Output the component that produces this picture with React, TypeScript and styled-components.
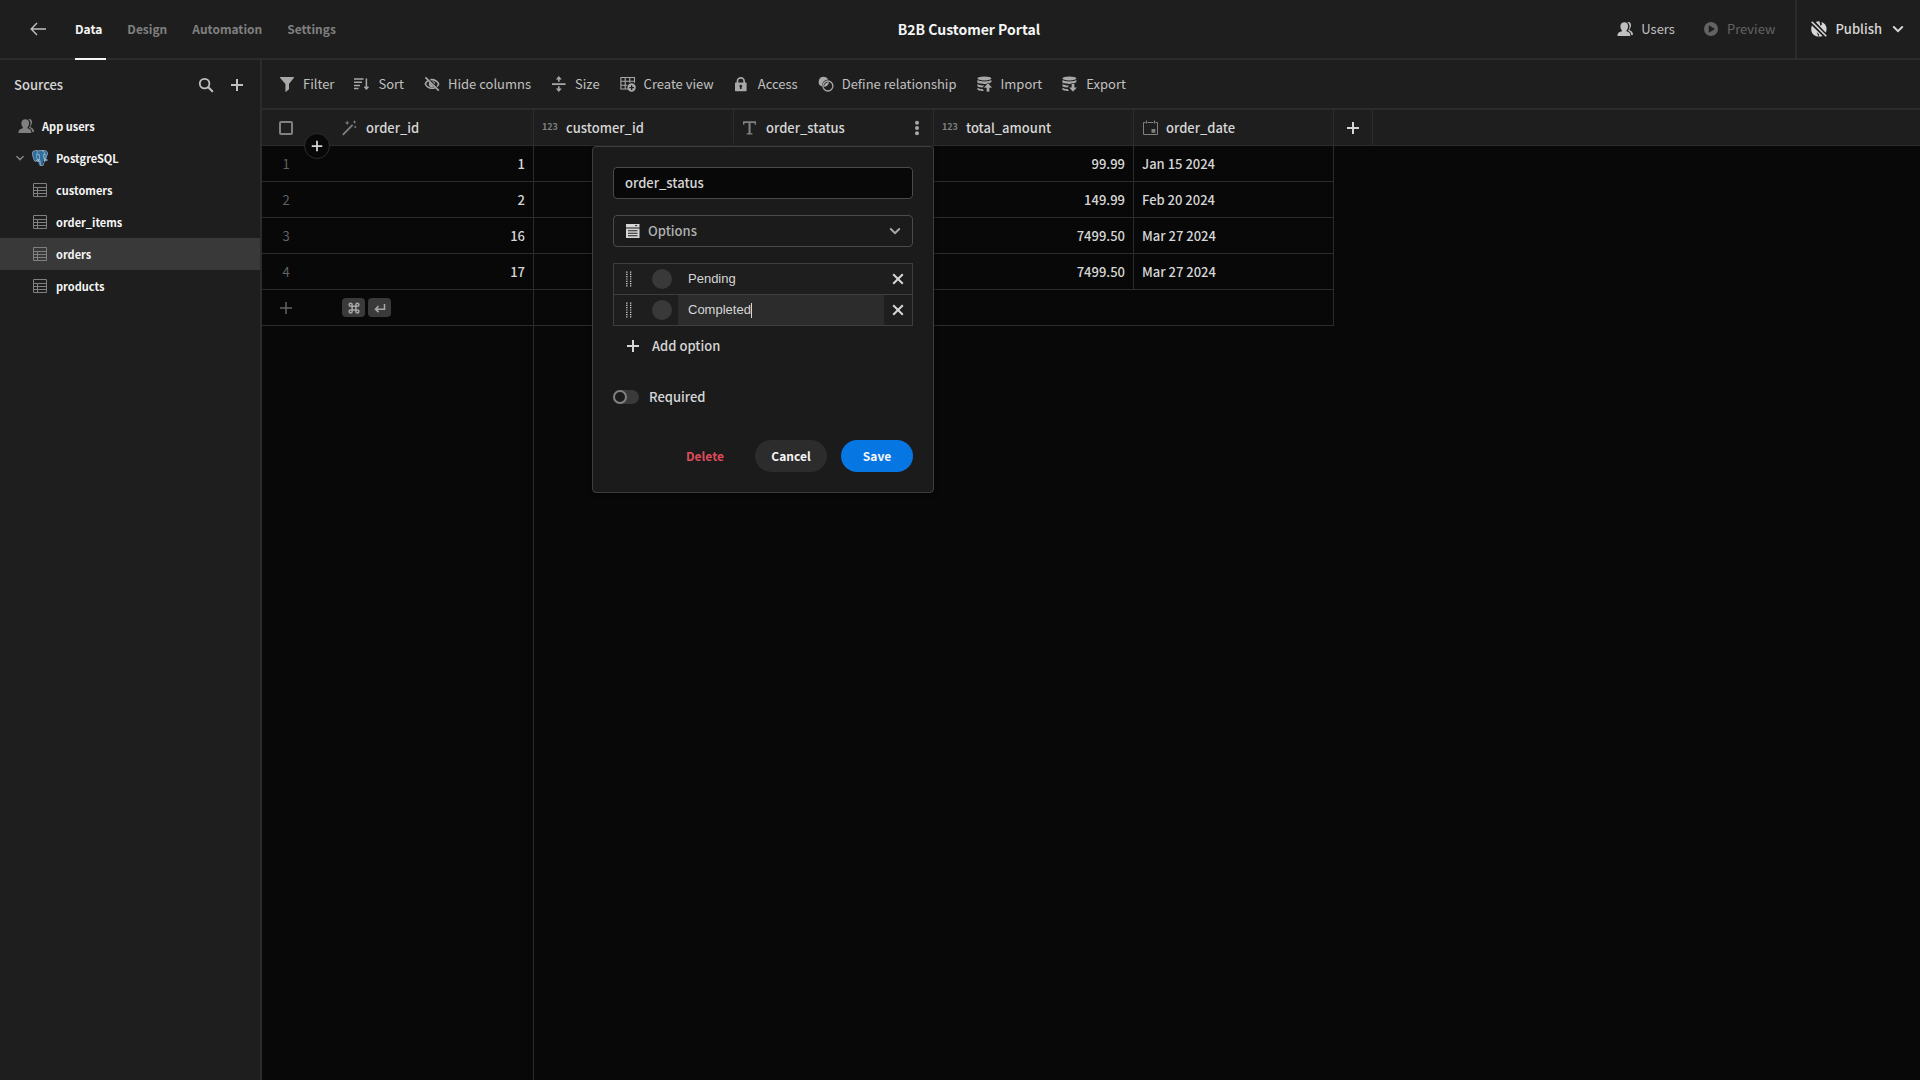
import React from "react";
import styled, { createGlobalStyle } from "styled-components";
import { SiPostgresql } from "react-icons/si";

const c = {
  page: "#080808",
  panel: "#1e1e1e",
  popover: "#1b1b1b",
  line: "#2c2c2c",
  lineStrong: "#3e3e3e",
  field: "#4a4a4a",
  selected: "#393939",
  text: "#d6d6d6",
  soft: "#c0c0c0",
  icon: "#a8a8a8",
  muted: "#808080",
  faint: "#636363",
  white: "#f5f5f5",
  blue: "#0676e3",
  red: "#df4b5a",
};

const GlobalStyle = createGlobalStyle`
  *, *::before, *::after { box-sizing: border-box; }
  body {
    margin: 0;
    background: ${c.page};
    color: ${c.text};
    font-family: "Noto Sans CJK SC", "Source Sans Pro", "Open Sans", sans-serif;
    font-size: 13px;
    line-height: 18px;
  }
  button, input, select { font: inherit; color: inherit; margin: 0; }
  button { background: none; border: 0; padding: 0; cursor: pointer; }
  svg { display: block; flex: none; }
  h1, h2 { margin: 0; font-size: inherit; }
`;

/* ---------- icons ---------- */

const Svg = ({ size = 16, children }: { size?: number; children: React.ReactNode }) => (
  <svg width={size} height={size} viewBox="0 0 16 16" fill="currentColor" aria-hidden="true">
    {children}
  </svg>
);

const stroke = { fill: "none", stroke: "currentColor" } as const;

const BackIcon = () => (
  <Svg><path {...stroke} strokeWidth="1.4" d="M16 8H1.2M7 2 1.2 8 7 14" /></Svg>
);
const PlusIcon = ({ weight = 2 }: { weight?: number }) => (
  <Svg><path {...stroke} strokeWidth={weight} d="M8 2v12M2 8h12" /></Svg>
);
const SearchIcon = () => (
  <Svg>
    <circle {...stroke} strokeWidth="1.8" cx="6.6" cy="6.6" r="4.8" />
    <path {...stroke} strokeWidth="2" strokeLinecap="round" d="m10.3 10.3 4 4" />
  </Svg>
);
const UsersIcon = () => (
  <Svg>
    <path d="M10.3 1.3C12.2.5 14 1.7 14 4.3c0 1.6-.6 2.8-1.3 3.600-.3.400-.2 1.400.2 1.600 1.700.6 3 1.500 3.100 4.500h-1.700c-.2-2.300-1.500-3.600-3.300-4.300.9-1.300 1.500-2.800 1.500-4.500 0-1.600-.8-3.100-2.200-3.900z" />
    <path d="M7.400 1.300c2.300 0 3.700 1.500 3.700 3.900 0 1.700-.7 3-1.400 3.900-.4.500-.3 1.300.3 1.500 2 .6 3.300 1.500 3.400 4.400H.4c.1-2.900 1.500-3.800 3.900-4.400.7-.2.800-1 .400-1.500-.7-.9-1.300-2.200-1.300-3.900 0-2.400 1.700-3.900 4-3.900z" />
  </Svg>
);
const PlayIcon = () => (
  <Svg><path fillRule="evenodd" d="M8 1a7 7 0 1 1 0 14A7 7 0 0 1 8 1zM5.800 4.200v7.600L12 8z" /></Svg>
);
const GlobeStrikeIcon = () => (
  <Svg>
    <path d="M4.800.9 14.600 11.800c.6-1.100 1-2.400 1-3.800 0-3.300-2.200-6-5.200-6.900l.6 2.400-1.700 1.200L8.500.4C7.200.3 6 .5 4.800.9z" />
    <path d="M.9 4.400 11.600 15c-3.400 1.400-7.900.3-9.900-2.300C0 10.400-.2 7.200.9 4.400z" />
    <path fill="none" stroke={c.panel} strokeWidth="4" d="m.7.7 14.600 14.600" />
    <path {...stroke} strokeWidth="1.600" d="m.7.7 14.600 14.600" />
    <path d="M5.600 11 7.600 15.800l.6-2.400z" fill={c.panel} />
  </Svg>
);
const ChevronIcon = ({ size = 16, weight = 2 }: { size?: number; weight?: number }) => (
  <Svg size={size}><path {...stroke} strokeWidth={weight} strokeLinecap="round" d="M3.800 6 8 10.200 12.200 6" /></Svg>
);
const FilterIcon = () => (
  <Svg><path d="M1.400.9h13.100c.5 0 .7.500.4.900L10 8v5.300l-3 2.500c-.3.200-.6 0-.6-.3V8L1 1.800c-.3-.4-.1-.9.400-.9z" /></Svg>
);
const SortIcon = () => (
  <Svg><path {...stroke} strokeWidth="1.500" d="M0 3h9.500M0 6.200h8M0 9.400h6M0 12.600h4.500M12.400 2.500v10.500M10.400 10.800l2 2.200 2-2.200" /></Svg>
);
const HideIcon = () => (
  <Svg>
    <path {...stroke} strokeWidth="1.600" d="M4 4.600C2.600 5.600 1.600 7 1.300 8c.9 2 3.500 4.300 6.700 4.300 1 0 2-.2 2.800-.6M6.300 3.800C10.500 3 13.800 5.600 14.700 8c-.3.800-.9 1.700-1.800 2.500" />
    <path d="M5.200 6.200 9.600 10.700A3.200 3.200 0 0 1 5.200 6.200zM8 4.900a3.200 3.200 0 0 1 3.100 3.700z" />
    <path {...stroke} strokeWidth="1.600" d="m1.400 1.400 13.400 13.200" />
  </Svg>
);
const SizeIcon = () => (
  <Svg><path d="M1 7.200h13.500v1.700H1zM7 5.800V3.500H4.800L7.800 0l3 3.500H8.600v2.300zM7 10.200v2.300H4.800l3 3.500 3-3.500H8.600v-2.300z" /></Svg>
);
const CreateViewIcon = () => (
  <Svg>
    <path {...stroke} strokeWidth="1.100" d="M8 13H.9V1.500h13.600v5.200M.9 5.200h13.600M.9 9.200h6.300M5.200 1.500V13M9.800 1.500v5.200" />
    <path fillRule="evenodd" d="M11.600 7.300a4.200 4.200 0 1 1 0 8.400 4.200 4.200 0 0 1 0-8.400zM11 9.200v1.700H9.300v1.300H11v1.700h1.300v-1.700H14v-1.300h-1.700V9.200z" />
  </Svg>
);
const LockIcon = () => (
  <Svg><path fillRule="evenodd" d="M2.600 6.500V5.300a4.200 4.200 0 0 1 8.400 0v1.200h1.100c.3 0 .5.200.5.500v7.800c0 .3-.2.500-.5.500H1.500c-.3 0-.5-.2-.5-.5V7c0-.3.200-.5.500-.5zM4.300 6.500h5V5.300a2.500 2.500 0 0 0-5 0zM6.800 8.800A1.400 1.400 0 0 0 6 11.300v1.800h1.600v-1.800a1.400 1.400 0 0 0-.8-2.500z" /></Svg>
);
const RelationIcon = () => (
  <Svg>
    <path d="M5.900.8A5 5 0 0 1 10.300 3.500 6.300 6.300 0 0 0 4 10.500 5 5 0 0 1 5.900.8z" />
    <path d="M11 6.200A5 5 0 0 1 5.800 10.800 5 5 0 0 1 11 6.200z" />
    <circle {...stroke} strokeWidth="1.300" cx="9.900" cy="10" r="5" />
  </Svg>
);
const DataIcon = ({ down }: { down?: boolean }) => (
  <Svg>
    <ellipse cx="7.400" cy="2.400" rx="7" ry="2" />
    <path d="M.4 4.100c2 1.700 12 1.700 14 0v1.800c-.2.500-3.200 2-7 2S.400 7 .400 6.500z" />
    <path d="M.4 8c1.500 1 4 1.600 6.800 1.500l-1.700 2C3 11.400.400 10.700.400 10z M.4 11.800c1.200.8 3 1.200 5.200 1.300L6.900 15C3 15 .400 14.200.400 13.300z" />
    {down ? (
      <path d="M9.300 7.500h3.400v3.700h2.800L11 16l-4.500-4.800h2.800z" stroke={c.panel} strokeWidth=".600" />
    ) : (
      <path d="M9.300 15.900h3.400v-4h2.900L11 6.700l-4.600 5.200h2.900z" stroke={c.panel} strokeWidth=".600" />
    )}
  </Svg>
);
const WandIcon = () => (
  <Svg>
    <path {...stroke} strokeWidth="1.800" d="M.8 14.900 10.600 4.900" />
    <path d="m5.200.5.700 1.700 1.700.7-1.700.7-.7 1.700-.7-1.700-1.700-.7 1.700-.7zM12.600 0l.5 1.400 1.500.5-1.500.6-.5 1.400-.6-1.400-1.400-.6 1.400-.5zM13.200 5.600l.5 1 1 .5-1 .5-.5 1-.5-1-1-.5 1-.5z" />
  </Svg>
);
const TextIcon = () => (
  <Svg><path d="M1 1.300h13v3.500h-1.200l-.5-1.700H8.600v9.800l1.900.6v1H4.600v-1l1.900-.6V3.100H2.700l-.5 1.700H1z" /></Svg>
);
const CalendarIcon = () => (
  <Svg>
    <path {...stroke} strokeWidth="1" d="M3.500 2.500H1.500v12h14v-12h-2M5.500 2.500h6M4.500.5v3M12.500.5v3" />
    <path d="M9.500 9h3.800v3.800H9.500z" />
  </Svg>
);
const MoreIcon = () => (
  <Svg><circle cx="8" cy="2.800" r="2" /><circle cx="8" cy="8" r="2" /><circle cx="8" cy="13.200" r="2" /></Svg>
);
const TableIcon = () => (
  <Svg><path {...stroke} strokeWidth="1" d="M1.500 1.500h13v13h-13zM1.500 5.500h13M1.500 8.500h13M1.500 11.500h13M5.500 5.500v9" /></Svg>
);
const OptionsIcon = () => (
  <Svg>
    <path fillRule="evenodd" d="M1 1h13.500v3.500H1zM9.800 2l1.300 1.600L12.400 2z" />
    <path fillRule="evenodd" d="M1 5.500h13.500V15H1zM3 7.300v1h9.500v-1zM3 9.800v1h9.500v-1zM3 12.200v1h9.500v-1z" />
  </Svg>
);
const CrossIcon = () => (
  <Svg><path {...stroke} strokeWidth="2" d="m3.200 3.200 9.600 9.600M12.800 3.200l-9.600 9.600" /></Svg>
);
const GripIcon = () => (
  <Svg>
    {[0, 1, 2, 3, 4, 5, 6].map((i) => (
      <path key={i} d={`M4.200 ${0.500 + i * 2.300}h1.300v1.200h-1.300zM8 ${0.500 + i * 2.300}h1.300v1.200H8z`} />
    ))}
  </Svg>
);
const CommandIcon = () => (
  <Svg size={12}><path {...stroke} strokeWidth="2" d="M5.500 5.500h5v5h-5zM5.500 5.500h-2a2 2 0 1 1 2-2zM10.500 5.500v-2a2 2 0 1 1 2 2zM10.500 10.500h2a2 2 0 1 1-2 2zM5.500 10.500v2a2 2 0 1 1-2-2z" /></Svg>
);
const ReturnIcon = () => (
  <Svg size={12}><path {...stroke} strokeWidth="2" d="M14 2.500v7H2.500M6 5.500l-4 4 4 4" /></Svg>
);

/* ---------- shell ---------- */

const Shell = styled.div`
  min-height: 100vh;
  display: grid;
  grid-template: auto 1fr / 262px minmax(0, 1fr);
`;

const Header = styled.header`
  grid-column: 1 / -1;
  display: grid;
  grid-template-columns: 1fr auto 1fr;
  align-items: stretch;
  height: 60px;
  padding-left: 18px;
  background: ${c.panel};
  border-bottom: 2px solid ${c.line};
`;

const HeaderNav = styled.nav`
  display: flex;
  align-items: stretch;
  gap: 25px;
  padding-left: 12px;
`;

const BackButton = styled.button`
  color: ${c.soft};
  margin-right: 4px;
`;

const Tab = styled.a<{ $active?: boolean }>`
  position: relative;
  display: flex;
  align-items: center;
  font-size: 12px;
  font-weight: 700;
  text-decoration: none;
  color: ${(p) => (p.$active ? c.white : c.muted)};
  &::after {
    content: "";
    position: absolute;
    left: 0;
    right: -4px;
    bottom: -2px;
    height: 2px;
    background: ${(p) => (p.$active ? c.white : "transparent")};
  }
`;

const Title = styled.h1`
  align-self: center;
  font-size: 14px;
  font-weight: 700;
  color: ${c.white};
`;

const HeaderActions = styled.div`
  display: flex;
  justify-content: flex-end;
  align-items: stretch;
`;

const HeaderButton = styled.button<{ $dim?: boolean }>`
  display: flex;
  align-items: center;
  gap: 8px;
  margin-right: ${(p) => (p.$dim ? 20 : 28)}px;
  color: ${(p) => (p.$dim ? c.faint : c.soft)};
`;

const PublishButton = styled(HeaderButton)`
  margin-right: 0;
  padding: 0 14px;
  border-left: 2px solid ${c.line};
  font-weight: 500;
  color: ${c.text};
`;

/* ---------- sidebar ---------- */

const Sidebar = styled.aside`
  background: ${c.panel};
  border-right: 2px solid ${c.line};
`;

const SidebarHead = styled.div`
  display: flex;
  align-items: center;
  gap: 15px;
  height: 50px;
  padding: 0 15px 0 14px;
  color: ${c.soft};
  h2 { flex: 1; font-weight: 500; color: ${c.text}; }
`;

const SourceList = styled.ul`
  list-style: none;
  margin: 0;
  padding: 0;
`;

const SourceLink = styled.a<{ $indent: number; $gap?: number; $selected?: boolean }>`
  display: flex;
  align-items: center;
  gap: ${(p) => p.$gap ?? 8}px;
  height: 32px;
  padding-left: ${(p) => p.$indent}px;
  font-size: 11px;
  font-weight: 700;
  text-decoration: none;
  color: ${c.white};
  background: ${(p) => (p.$selected ? c.selected : "transparent")};
  svg { color: ${c.muted}; }
`;

const PgLogo = styled.span`
  display: grid;
  margin-right: 2px;
  svg { grid-area: 1 / 1; }
  svg:last-child { color: #c9d6df; }
`;

/* ---------- content ---------- */

const Content = styled.main`
  display: flex;
  flex-direction: column;
  min-width: 0;
`;

const Toolbar = styled.div`
  display: flex;
  align-items: center;
  gap: 20px;
  height: 50px;
  padding: 0 17px;
  background: ${c.panel};
  border-bottom: 2px solid ${c.line};
`;

const ToolButton = styled.button`
  display: flex;
  align-items: center;
  gap: 8px;
  white-space: nowrap;
  color: ${c.soft};
  svg { color: ${c.icon}; }
`;

const Grid = styled.table`
  width: 100%;
  table-layout: fixed;
  border-collapse: separate;
  border-spacing: 0;
`;

const Col = styled.col<{ $w?: number }>`
  width: ${(p) => (p.$w ? `${p.$w}px` : "auto")};
`;

const HeadCell = styled.th<{ $line?: boolean }>`
  position: relative;
  height: 36px;
  padding: 0 8px;
  text-align: left;
  font-weight: 500;
  background: ${c.panel};
  border-bottom: 1px solid ${c.line};
  border-right: ${(p) => (p.$line ? `1px solid ${c.line}` : "0")};
`;

const HeadLabel = styled.div`
  display: flex;
  align-items: center;
  gap: 8px;
  color: ${c.muted};
  > span { flex: 1; color: ${c.text}; }
`;

const NumberMark = styled.b`
  width: 16px;
  font-size: 9px;
  line-height: 12px;
  padding-bottom: 2px;
`;

const MoreButton = styled.button`
  color: ${c.icon};
`;

const Gutter = styled.div`
  display: grid;
  place-items: center;
  width: 48px;
  color: ${c.faint};
`;

const CheckBox = styled.input`
  appearance: none;
  display: block;
  width: 14px;
  height: 14px;
  border: 2px solid ${c.muted};
  border-radius: 2px;
`;

const InsertButton = styled.button`
  position: absolute;
  z-index: 2;
  left: 42px;
  bottom: -14px;
  display: grid;
  place-items: center;
  width: 26px;
  height: 26px;
  border: 1px solid ${c.line};
  border-radius: 50%;
  background: ${c.page};
  color: ${c.text};
  svg { width: 14px; height: 14px; }
`;

const Cell = styled.td<{ $right?: boolean; $line?: boolean }>`
  height: 36px;
  padding: 0 8px;
  text-align: ${(p) => (p.$right ? "right" : "left")};
  font-weight: 500;
  border-bottom: 1px solid ${c.line};
  border-right: ${(p) => (p.$line ? `1px solid ${c.line}` : "0")};
`;

const GutterCell = styled(Cell)`
  padding: 0;
  font-weight: 400;
`;

const GutterHead = styled(HeadCell)`
  padding: 0;
`;

const AddColumn = styled.button`
  display: grid;
  margin: 0 auto;
  color: ${c.text};
`;

const Keys = styled.div`
  display: flex;
  gap: 3px;
  kbd {
    display: grid;
    place-items: center;
    width: 23px;
    height: 19px;
    border-radius: 4px;
    background: #3a3a3a;
    color: ${c.icon};
  }
`;

const PinnedRest = styled.div`
  flex: 1;
  width: 272px;
  border-right: 1px solid ${c.line};
`;

/* ---------- column editor ---------- */

const Popover = styled.form`
  position: absolute;
  z-index: 3;
  top: calc(100% + 1px);
  right: -1px;
  width: 342px;
  padding: 20px;
  display: flex;
  flex-direction: column;
  background: ${c.popover};
  border: 1px solid ${c.lineStrong};
  border-radius: 4px;
  box-shadow: 0 1px 4px rgba(0, 0, 0, 0.5);
`;

const NameInput = styled.input`
  width: 100%;
  height: 32px;
  padding: 0 11px 2px;
  border: 1px solid ${c.field};
  border-radius: 4px;
  background: ${c.page};
  font-weight: 500;
  outline: none;
`;

const SelectWrap = styled.div`
  position: relative;
  margin: 16px 0;
  color: ${c.text};
  svg { position: absolute; top: 8px; left: 12px; pointer-events: none; }
  svg:last-child { left: auto; right: 10px; color: ${c.icon}; }
`;

const TypeSelect = styled.select`
  appearance: none;
  display: block;
  width: 100%;
  height: 32px;
  padding: 0 34px;
  border: 1px solid ${c.field};
  border-radius: 4px;
  background: ${c.popover};
  color: #b0b0b0;
`;

const OptionList = styled.ul`
  list-style: none;
  margin: 0;
  padding: 0;
  border: 1px solid ${c.lineStrong};
`;

const OptionRow = styled.li`
  display: flex;
  align-items: center;
  height: 31px;
  padding-left: 8px;
  background: ${c.panel};
  &:not(:last-child) { border-bottom: 1px solid ${c.lineStrong}; }
  &:last-child { height: 30px; }
`;

const Swatch = styled.button`
  width: 20px;
  height: 20px;
  margin: 0 6px 0 14px;
  border-radius: 50%;
  background: ${c.selected};
`;

const OptionField = styled.label<{ $active?: boolean }>`
  flex: 1;
  align-self: stretch;
  display: flex;
  align-items: center;
  padding-left: 10px;
  background: ${(p) => (p.$active ? "#2c2c2c" : "transparent")};
`;

const OptionInput = styled.input`
  field-sizing: content;
  padding: 0;
  border: 0;
  background: none;
  outline: none;
  font-family: "Liberation Sans", Arial, sans-serif;
  font-size: 13px;
`;

const Caret = styled.i`
  width: 1px;
  height: 15px;
  background: ${c.text};
`;

const RemoveButton = styled.button`
  display: grid;
  place-items: center;
  width: 28px;
  height: 28px;
`;

const AddOption = styled.button`
  display: flex;
  align-items: center;
  gap: 11px;
  height: 40px;
  padding-left: 12px;
  font-weight: 500;
`;

const SwitchRow = styled.label`
  display: flex;
  align-items: center;
  gap: 10px;
  height: 32px;
  margin: 15px 0 27px;
`;

const Switch = styled.input`
  appearance: none;
  width: 26px;
  height: 14px;
  border-radius: 7px;
  background: #3a3a3a;
  &::before {
    content: "";
    display: block;
    width: 14px;
    height: 14px;
    border: 2px solid ${c.muted};
    border-radius: 50%;
    background: ${c.popover};
  }
`;

const Actions = styled.div`
  display: flex;
  justify-content: flex-end;
  gap: 14px;
`;

const PillButton = styled.button<{ $bg?: string; $fg?: string }>`
  height: 32px;
  padding: 0 16px;
  min-width: 72px;
  border-radius: 16px;
  font-size: 12px;
  font-weight: 700;
  background: ${(p) => p.$bg ?? "transparent"};
  color: ${(p) => p.$fg ?? c.white};
`;

/* ---------- data ---------- */

const tools: [string, React.ReactNode][] = [
  ["Filter", <FilterIcon />],
  ["Sort", <SortIcon />],
  ["Hide columns", <HideIcon />],
  ["Size", <SizeIcon />],
  ["Create view", <CreateViewIcon />],
  ["Access", <LockIcon />],
  ["Define relationship", <RelationIcon />],
  ["Import", <DataIcon />],
  ["Export", <DataIcon down />],
];

const tables = ["customers", "order_items", "orders", "products"];

const rows = [
  { id: 1, total: "99.99", date: "Jan 15 2024" },
  { id: 2, total: "149.99", date: "Feb 20 2024" },
  { id: 16, total: "7499.50", date: "Mar 27 2024" },
  { id: 17, total: "7499.50", date: "Mar 27 2024" },
];

const ColumnEditor = () => (
  <Popover onSubmit={(e) => e.preventDefault()}>
    <NameInput aria-label="Column name" defaultValue="order_status" />
    <SelectWrap>
      <OptionsIcon />
      <TypeSelect aria-label="Column type"><option>Options</option></TypeSelect>
      <ChevronIcon />
    </SelectWrap>
    <OptionList>
      {["Pending", "Completed"].map((name) => (
        <OptionRow key={name}>
          <GripIcon />
          <Swatch type="button" aria-label={`${name} colour`} />
          <OptionField $active={name === "Completed"}>
            <OptionInput aria-label="Option name" defaultValue={name} />
            {name === "Completed" && <Caret />}
          </OptionField>
          <RemoveButton type="button" aria-label={`Remove ${name}`}><CrossIcon /></RemoveButton>
        </OptionRow>
      ))}
    </OptionList>
    <AddOption type="button"><PlusIcon />Add option</AddOption>
    <SwitchRow><Switch type="checkbox" role="switch" />Required</SwitchRow>
    <Actions>
      <PillButton type="button" $fg={c.red}>Delete</PillButton>
      <PillButton type="button" $bg={c.line}>Cancel</PillButton>
      <PillButton type="submit" $bg={c.blue}>Save</PillButton>
    </Actions>
  </Popover>
);

export default function App() {
  return (
    <Shell>
      <GlobalStyle />
      <Header>
        <HeaderNav>
          <BackButton aria-label="Back"><BackIcon /></BackButton>
          <Tab href="#data" $active>Data</Tab>
          <Tab href="#design">Design</Tab>
          <Tab href="#automation">Automation</Tab>
          <Tab href="#settings">Settings</Tab>
        </HeaderNav>
        <Title>B2B Customer Portal</Title>
        <HeaderActions>
          <HeaderButton><UsersIcon />Users</HeaderButton>
          <HeaderButton $dim><PlayIcon />Preview</HeaderButton>
          <PublishButton><GlobeStrikeIcon />Publish<ChevronIcon /></PublishButton>
        </HeaderActions>
      </Header>

      <Sidebar>
        <SidebarHead>
          <h2>Sources</h2>
          <button aria-label="Search"><SearchIcon /></button>
          <button aria-label="Add source"><PlusIcon /></button>
        </SidebarHead>
        <SourceList>
          <li><SourceLink href="#users" $indent={18}><UsersIcon />App users</SourceLink></li>
          <li>
            <SourceLink href="#postgres" $indent={14} $gap={6}>
              <ChevronIcon size={12} />
              <PgLogo>
                <svg width="16" height="16" viewBox="0 0 24 24" aria-hidden="true">
                  <path fill="#2f6f9f" d="M5 1C1 1 0 4 1 8c1 4 2 8 4 8.500 1.500.4 3-.5 3.500-.5.500 0 1 6 3 7.500 1.500 1 4 .5 4.500-2 .4-2 .3-4 .6-5 3 .3 5-.5 6-1.500-1-1-1.600-2-.6-4C23.500 7.500 24 4 21.500 2 19 .2 16 .5 14 1c-2-.5-3-.3-4.500.3C8 .9 6.500.8 5 1z" />
                </svg>
                <SiPostgresql size={16} />
              </PgLogo>
              PostgreSQL
            </SourceLink>
          </li>
          {tables.map((t) => (
            <li key={t}>
              <SourceLink href={`#${t}`} $indent={32} $selected={t === "orders"}><TableIcon />{t}</SourceLink>
            </li>
          ))}
        </SourceList>
      </Sidebar>

      <Content>
        <Toolbar>
          {tools.map(([label, icon]) => (
            <ToolButton key={label}>{icon}{label}</ToolButton>
          ))}
        </Toolbar>
        <Grid>
          <colgroup>
            <Col $w={72} /><Col $w={200} /><Col $w={200} /><Col $w={200} />
            <Col $w={200} /><Col $w={200} /><Col $w={39} /><Col />
          </colgroup>
          <thead>
            <tr>
              <GutterHead>
                <Gutter><CheckBox type="checkbox" aria-label="Select all rows" /></Gutter>
                <InsertButton aria-label="Insert row"><PlusIcon /></InsertButton>
              </GutterHead>
              <HeadCell $line><HeadLabel><WandIcon /><span>order_id</span></HeadLabel></HeadCell>
              <HeadCell $line><HeadLabel><NumberMark>123</NumberMark><span>customer_id</span></HeadLabel></HeadCell>
              <HeadCell $line>
                <HeadLabel>
                  <TextIcon /><span>order_status</span>
                  <MoreButton aria-label="Column menu"><MoreIcon /></MoreButton>
                </HeadLabel>
                <ColumnEditor />
              </HeadCell>
              <HeadCell $line><HeadLabel><NumberMark>123</NumberMark><span>total_amount</span></HeadLabel></HeadCell>
              <HeadCell $line><HeadLabel><CalendarIcon /><span>order_date</span></HeadLabel></HeadCell>
              <HeadCell $line><AddColumn aria-label="Add column"><PlusIcon /></AddColumn></HeadCell>
              <HeadCell />
            </tr>
          </thead>
          <tbody>
            {rows.map((r, i) => (
              <tr key={r.id}>
                <GutterCell><Gutter>{i + 1}</Gutter></GutterCell>
                <Cell $right $line>{r.id}</Cell>
                <Cell $line />
                <Cell $line />
                <Cell $right $line>{r.total}</Cell>
                <Cell $line>{r.date}</Cell>
              </tr>
            ))}
            <tr>
              <GutterCell><Gutter><PlusIcon weight={1.5} /></Gutter></GutterCell>
              <Cell $line><Keys><kbd><CommandIcon /></kbd><kbd><ReturnIcon /></kbd></Keys></Cell>
              <Cell $line colSpan={4} />
            </tr>
          </tbody>
        </Grid>
        <PinnedRest />
      </Content>
    </Shell>
  );
}
